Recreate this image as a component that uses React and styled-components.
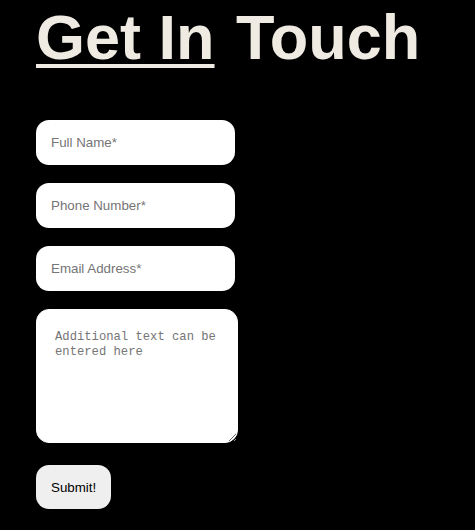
import React from "react";
import styled, { createGlobalStyle } from "styled-components";

const GlobalStyle = createGlobalStyle`
  body {
    margin: 0;
    background: #000;
    font-family: "Liberation Sans", Arial, sans-serif;
  }
`;

const Page = styled.div`
  padding: 0 36px;
  min-height: 530px;
  background: #000;
`;

const Heading = styled.h1`
  margin: 0;
  padding-top: 1px;
  font-size: 63px;
  font-weight: bold;
  color: #efebe2;
  line-height: normal;
`;

const Underlined = styled.span`
  margin-right: 4px;
  text-decoration: underline;
  text-decoration-thickness: 4px;
  text-underline-offset: 5px;
`;

const Form = styled.form`
  display: flex;
  flex-direction: column;
  align-items: flex-start;
  gap: 18px;
  margin-top: 47px;
`;

const Field = styled.input`
  box-sizing: border-box;
  width: 199px;
  height: 45px;
  padding: 0 15px;
  border: none;
  border-radius: 13px;
  background: #fff;
  font-family: "Liberation Sans", Arial, sans-serif;
  font-size: 13.33px;
  outline: none;
  &::placeholder {
    color: #757575;
  }
`;

const Message = styled.textarea`
  box-sizing: border-box;
  width: 202px;
  height: 134px;
  padding: 20px 18px 18px;
  border: 1px solid #fff;
  border-radius: 13px;
  background: #fff;
  font-family: "Liberation Mono", "DejaVu Sans Mono", monospace;
  font-size: 12.2px;
  line-height: 15px;
  outline: none;
  &::placeholder {
    color: #757575;
  }
`;

const Submit = styled.button`
  margin-top: 4px;
  height: 44px;
  padding: 0 15px;
  border: none;
  border-radius: 13px;
  background: #efefef;
  color: #000;
  font-family: "Liberation Sans", Arial, sans-serif;
  font-size: 13.33px;
  cursor: pointer;
`;

export default function App() {
  return (
    <>
      <GlobalStyle />
      <Page>
        <Heading>
          <Underlined>Get In</Underlined> Touch
        </Heading>
        <Form onSubmit={(e) => e.preventDefault()}>
          <Field type="text" placeholder="Full Name*" />
          <Field type="tel" placeholder="Phone Number*" />
          <Field type="email" placeholder="Email Address*" />
          <Message placeholder="Additional text can be entered here" />
          <Submit type="submit">Submit!</Submit>
        </Form>
      </Page>
    </>
  );
}
